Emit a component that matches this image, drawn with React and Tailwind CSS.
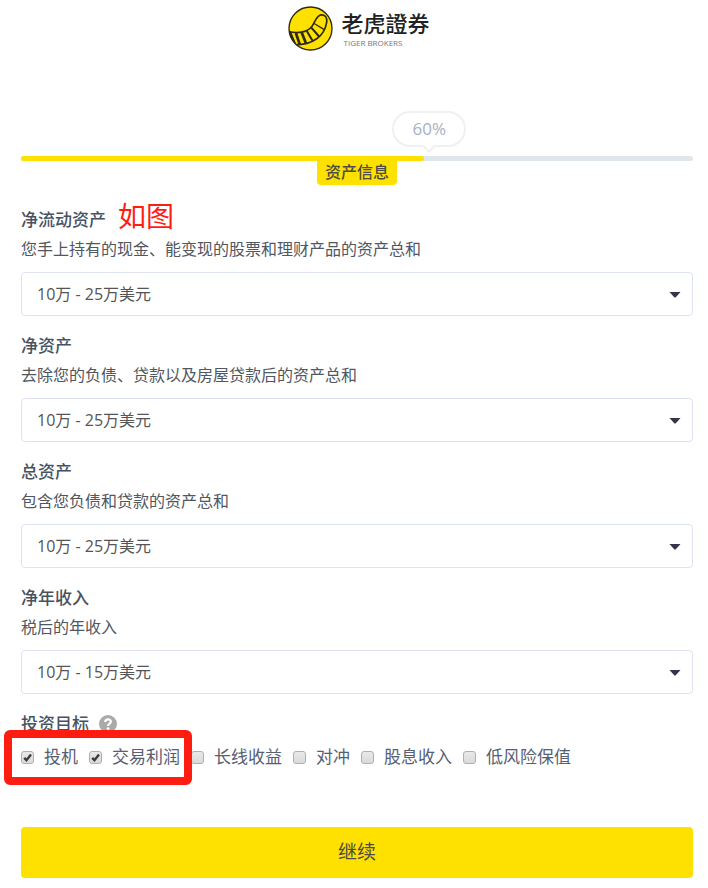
import { useState } from 'react';

const assetFields = [
  {
    id: 'liquid',
    label: '净流动资产',
    hint: '您手上持有的现金、能变现的股票和理财产品的资产总和',
    note: '如图',
    value: '10万 - 25万美元',
  },
  {
    id: 'net',
    label: '净资产',
    hint: '去除您的负债、贷款以及房屋贷款后的资产总和',
    value: '10万 - 25万美元',
  },
  {
    id: 'total',
    label: '总资产',
    hint: '包含您负债和贷款的资产总和',
    value: '10万 - 25万美元',
  },
  {
    id: 'income',
    label: '净年收入',
    hint: '税后的年收入',
    value: '10万 - 15万美元',
  },
];

const goals = ['投机', '交易利润', '长线收益', '对冲', '股息收入', '低风险保值'];

const Logo = () => (
  <div className="flex items-center justify-center gap-2 pl-1">
    <svg viewBox="0 0 132 132" className="size-[45px]" aria-hidden="true">
      <defs>
        <clipPath id="logo-disc">
          <circle cx="66" cy="66" r="64" />
        </clipPath>
      </defs>
      <circle cx="66" cy="66" r="63" fill="#ffe100" />
      <g clipPath="url(#logo-disc)" stroke="#2f2a12" fill="none" strokeLinecap="round">
        <path
          d="M0 74 C26 82 56 78 70 60 C80 47 82 29 97 26 C110 24 116 36 113 50 C106 88 74 114 20 114"
          strokeWidth="5"
        />
        <path d="M6 80 L18 110" strokeWidth="10" />
        <path d="M24 82 L34 111 M41 80 L52 108" strokeWidth="8" />
        <path d="M56 75 L72 102 M69 64 L90 88" strokeWidth="6" />
        <path d="M78 52 L104 68" strokeWidth="4" />
      </g>
      <circle cx="66" cy="66" r="63" fill="none" stroke="#2f2a12" strokeWidth="4" />
    </svg>
    <div className="flex flex-col">
      <span className="text-[22px] leading-7 font-medium text-[#222222]">老虎證券</span>
      <span className="pl-0.5 text-[8px] leading-3 text-[#777777]">TIGER BROKERS</span>
    </div>
  </div>
);

const Progress = () => (
  <div className="relative mt-[105px] h-[5px] rounded-sm bg-[#dfe7ec]">
    <div className="h-full w-3/5 rounded-sm bg-[#ffe100]" />
    <div className="absolute bottom-[14px] left-3/5 flex h-9 w-[74px] -translate-x-8 items-center justify-center rounded-full border-2 border-[#f0f0f1] bg-white text-[17px] text-[#a7b0c2]">
      60%
      <span className="absolute -bottom-[6px] size-[10px] rotate-45 border-r-2 border-b-2 border-[#f0f0f1] bg-white" />
    </div>
    <div className="absolute top-1 left-1/2 flex h-[25px] -translate-x-1/2 items-center rounded-b bg-[#ffe100] px-2 pb-0.5 text-base font-medium whitespace-nowrap text-[#4c4c44]">
      资产信息
    </div>
  </div>
);

const AssetField = ({ field }) => (
  <div className="mb-4">
    <div className="flex h-7 items-center gap-3">
      <label htmlFor={field.id} className="text-[17px] font-medium text-[#48525f]">
        {field.label}
      </label>
      {field.note && <span className="pb-2 text-[28px] leading-7 text-[#ff1d12]">{field.note}</span>}
    </div>
    <p className="text-base leading-[30px]">{field.hint}</p>
    <div className="relative mt-2">
      <select
        id={field.id}
        defaultValue={field.value}
        className="block h-11 w-full appearance-none rounded border border-[#dde3f2] bg-white px-[15px] text-base text-[#555555]"
      >
        <option>{field.value}</option>
      </select>
      <svg viewBox="0 0 12 6" className="pointer-events-none absolute top-5 right-3 h-[6px] w-3" aria-hidden="true">
        <path d="M0.5 0 H11.5 L7 5 Q6 6 5 5 Z" fill="#34344a" />
      </svg>
    </div>
  </div>
);

const Goal = ({ name, checked, onToggle }) => (
  <label className="flex items-center gap-[10px] text-[17px] leading-7 whitespace-nowrap text-[#566072]">
    <span className="relative flex">
      <input
        type="checkbox"
        checked={checked}
        onChange={onToggle}
        className="size-[13px] appearance-none rounded-[3px] border border-[#b0b0b0] bg-linear-to-b from-[#e9e9e9] to-[#dadada]"
      />
      {checked && (
        <svg viewBox="0 0 13 13" className="pointer-events-none absolute inset-0 size-[13px]" aria-hidden="true">
          <path d="M3.2 6.8 L5.5 9.2 L10 3.6" fill="none" stroke="#3c3c3c" strokeWidth="2.4" />
        </svg>
      )}
    </span>
    {name}
  </label>
);

export default function App() {
  const [selected, setSelected] = useState(['投机', '交易利润']);

  const toggle = (name) => {
    setSelected((prev) => (prev.includes(name) ? prev.filter((g) => g !== name) : [...prev, name]));
  };

  return (
    <main className="bg-white pt-[6px] pr-[15px] pb-[10px] pl-[21px] font-['Open_Sans','Noto_Sans_CJK_SC',sans-serif] text-[#50575f]">
      <Logo />
      <Progress />

      <form className="mt-[45px]" onSubmit={(e) => e.preventDefault()}>
        {assetFields.map((field) => (
          <AssetField key={field.id} field={field} />
        ))}

        <fieldset>
          <legend className="flex h-7 items-center gap-[10px] text-[17px] font-medium text-[#48525f]">
            投资目标
            <svg viewBox="0 0 18 18" className="size-[18px]" aria-hidden="true">
              <circle cx="9" cy="9" r="9" fill="#aaaaaa" />
              <path
                d="M6.2 7 C6.2 3.4 11.9 3.5 11.8 6.8 C11.8 8.7 9.1 8.7 9.1 11"
                fill="none"
                stroke="#ffffff"
                strokeWidth="2.2"
              />
              <circle cx="9.1" cy="13.6" r="1.4" fill="#ffffff" />
            </svg>
          </legend>
          <div className="relative mt-1 flex flex-wrap gap-x-[11px] pt-px">
            {goals.map((name) => (
              <Goal key={name} name={name} checked={selected.includes(name)} onToggle={() => toggle(name)} />
            ))}
            <div className="pointer-events-none absolute -top-3 -left-[17px] h-[55px] w-[188px] rounded-md border-8 border-[#ff1d12]" />
          </div>
        </fieldset>

        <button
          type="submit"
          className="mt-14 block h-[51px] w-full rounded bg-[#ffe100] text-[19px] text-[#4c4c44]"
        >
          继续
        </button>
      </form>
    </main>
  );
}
